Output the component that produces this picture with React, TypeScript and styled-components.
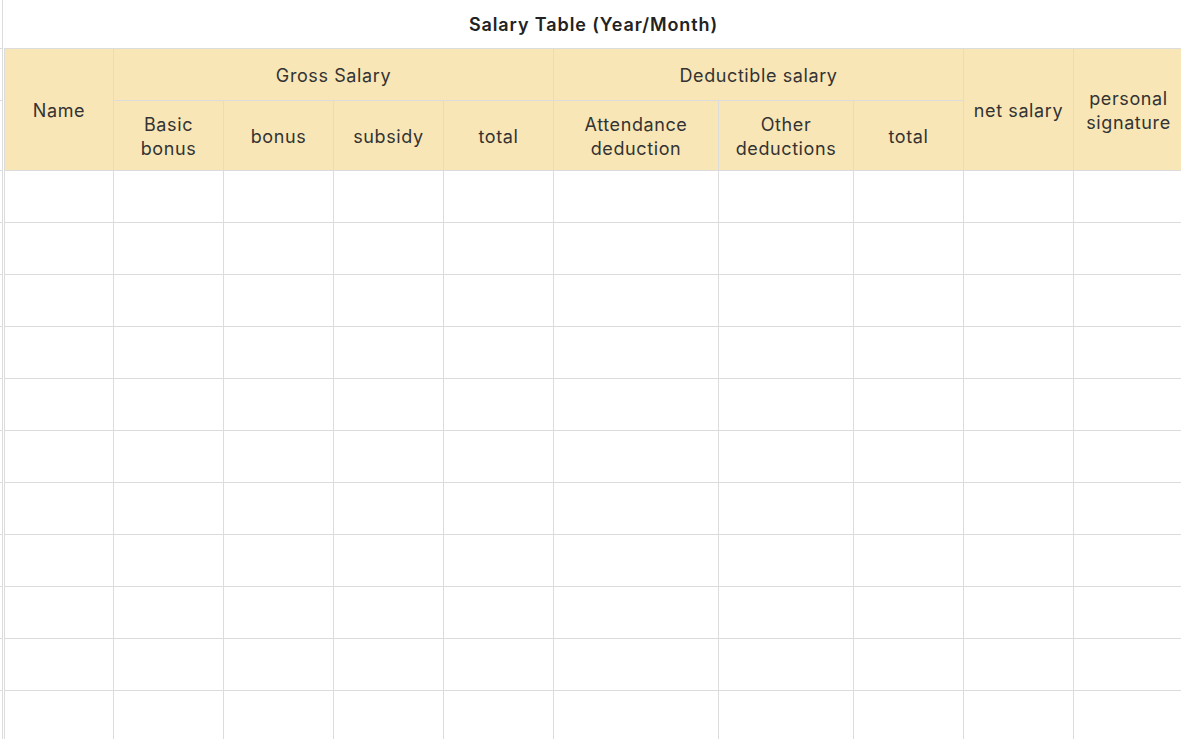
import React from "react";
import styled, { createGlobalStyle } from "styled-components";

const GlobalStyle = createGlobalStyle`
  html, body {
    margin: 0;
    padding: 0;
    background: #ffffff;
    overflow: hidden;
  }
  body {
    font-family: Inter, "Noto Sans", "Liberation Sans", sans-serif;
    color: #333333;
  }
`;

const BORDER = "#dcdcdc";

const Page = styled.div`
  display: flex;
  width: 1181px;
  height: 739px;
  overflow: hidden;
  align-items: flex-start;
`;

const Gutter = styled.div`
  flex: 0 0 2px;
  display: flex;
  flex-direction: column;
  border-right: 1px solid ${BORDER};
  margin-right: 1px;
  align-self: stretch;
`;

const Tick = styled.div<{ $h: number }>`
  height: ${(p) => p.$h - 1}px;
  border-bottom: 1px solid ${BORDER};
  flex: 0 0 auto;
`;

const Sheet = styled.div`
  flex: 1 0 auto;
  display: flex;
  flex-direction: column;
`;

const Title = styled.div`
  flex: 0 0 48px;
  display: flex;
  align-items: center;
  justify-content: center;
  font-size: 18px;
  font-weight: 600;
  letter-spacing: 0.9px;
  color: #222222;
  padding-right: 1px;
  box-sizing: border-box;
`;

const Grid = styled.div`
  flex: 0 0 auto;
  display: grid;
  grid-template-columns: 109px 110px 110px 110px 110px 165px 135px 110px 110px 110px;
  grid-template-rows: 52px 70px;
  grid-auto-rows: 52px;
  border-top: 1px solid ${BORDER};
  border-left: 1px solid ${BORDER};
  width: max-content;
`;

const Cell = styled.div<{ $col?: string; $row?: string }>`
  box-sizing: border-box;
  border-right: 1px solid ${BORDER};
  border-bottom: 1px solid ${BORDER};
  ${(p) => (p.$col ? `grid-column: ${p.$col};` : "")}
  ${(p) => (p.$row ? `grid-row: ${p.$row};` : "")}
`;

const HeadCell = styled(Cell)`
  background: #f9e6b6;
  display: flex;
  align-items: center;
  justify-content: center;
  text-align: center;
  font-size: 18px;
  letter-spacing: 0.6px;
  line-height: 24px;
  color: #333333;
  padding: 2px 2px 0;
`;

const BodyCell = styled(Cell)`
  background: #ffffff;
`;

const subHeads: string[] = [
  "Basic\nbonus",
  "bonus",
  "subsidy",
  "total",
  "Attendance\ndeduction",
  "Other\ndeductions",
  "total",
];

const Lines: React.FC<{ text: string }> = ({ text }) => (
  <span>
    {text.split("\n").map((t, i, arr) => (
      <React.Fragment key={i}>
        {t}
        {i < arr.length - 1 && <br />}
      </React.Fragment>
    ))}
  </span>
);

const ROWS = 11;
const COLS = 10;

export default function App() {
  const tickHeights = [49, 52, 70, ...Array.from({ length: ROWS }, () => 52)];
  return (
    <>
      <GlobalStyle />
      <Page>
        <Gutter>
          {tickHeights.map((h, i) => (
            <Tick key={i} $h={h} />
          ))}
        </Gutter>
        <Sheet>
          <Title>Salary Table (Year/Month)</Title>
          <Grid>
            <HeadCell $col="1" $row="1 / span 2">
              Name
            </HeadCell>
            <HeadCell $col="2 / span 4" $row="1">
              Gross Salary
            </HeadCell>
            <HeadCell $col="6 / span 3" $row="1">
              Deductible salary
            </HeadCell>
            <HeadCell $col="9" $row="1 / span 2">
              net salary
            </HeadCell>
            <HeadCell $col="10" $row="1 / span 2">
              <Lines text={"personal\nsignature"} />
            </HeadCell>
            {subHeads.map((t, i) => (
              <HeadCell key={i} $col={`${i + 2}`} $row="2">
                <Lines text={t} />
              </HeadCell>
            ))}
            {Array.from({ length: ROWS * COLS }, (_, i) => (
              <BodyCell key={i} />
            ))}
          </Grid>
        </Sheet>
      </Page>
    </>
  );
}
